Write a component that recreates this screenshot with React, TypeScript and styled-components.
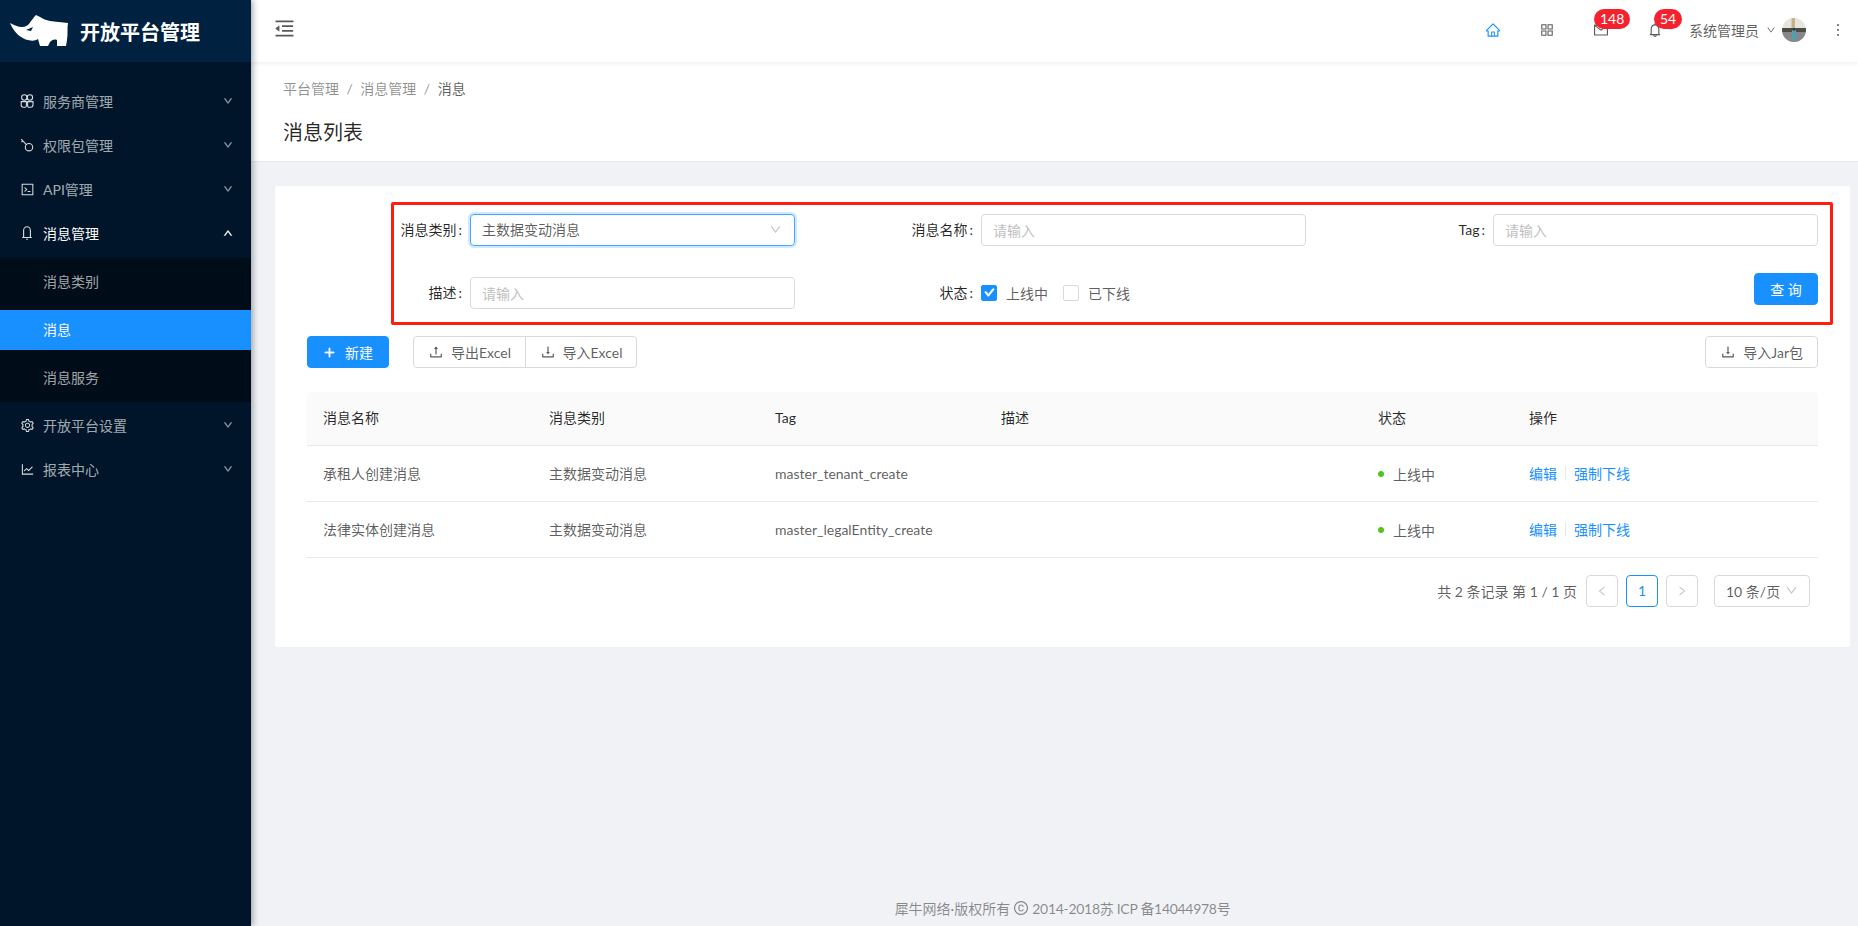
import React from 'react';
import styled, { createGlobalStyle } from 'styled-components';
import {
  AiOutlineBell,
  AiOutlineAppstore,
  AiOutlineCheck,
  AiOutlineCode,
  AiOutlineCopyright,
  AiOutlineDown,
  AiOutlineDownload,
  AiOutlineHome,
  AiOutlineLeft,
  AiOutlineLineChart,
  AiOutlineMail,
  AiOutlineMenuFold,
  AiOutlineMore,
  AiOutlinePlus,
  AiOutlineRight,
  AiOutlineSetting,
  AiOutlineUp,
  AiOutlineUpload,
} from 'react-icons/ai';

const GlobalStyle = createGlobalStyle`
  html, body {
    margin: 0;
    padding: 0;
    background: #f0f2f5;
  }
  * {
    box-sizing: border-box;
  }
  body {
    font-family: Lato, "Noto Sans CJK SC", sans-serif;
    font-size: 14px;
    color: rgba(0, 0, 0, 0.65);
  }
`;

const RhinoLogo = () => (
  <svg width="60" height="34" viewBox="0 0 60 34">
    <path
      fill="#fff"
      d="M0 9C4 11 8 13 12 13C15 13 17 12 19 10C21 7 24 3 26 1L30 3C33 5 36 6 40 7C45 8 52 8 58 9C57 14 58 20 57 26L56 32H47L47 26C44 25 42 26 40 28L38 32H30L28 25C25 27 22 27 18 26C12 25 4 19 0 9Z"
    />
    <path fill="#002140" d="M16 16L23 13L21 17Z" />
  </svg>
);

const CloverIcon = () => (
  <svg width="14" height="14" viewBox="0 0 14 14" fill="none" stroke="currentColor" strokeWidth="1.1">
    <circle cx="4.3" cy="3.5" r="2.7" />
    <circle cx="9.9" cy="3.5" r="2.7" />
    <path d="M1.2 7.6h5.2v4.2a1.4 1.4 0 0 1-1.4 1.4H3.4a2.2 2.2 0 0 1-2.2-2.2z" />
    <path d="M7.6 7.6h5.4v3.2a2.4 2.4 0 0 1-2.4 2.4H9a1.4 1.4 0 0 1-1.4-1.4z" />
  </svg>
);

const RingIcon = () => (
  <svg width="14" height="14" viewBox="0 0 14 14" fill="none" stroke="currentColor" strokeWidth="1.1">
    <circle cx="9" cy="9.2" r="3.7" />
    <path d="M6.4 6.6L1.2 1.2M2.8 2.8L1.4 4.2" />
  </svg>
);

const SideBellIcon = () => (
  <svg width="14" height="14" viewBox="0 0 14 14" fill="none" stroke="currentColor" strokeWidth="1.1">
    <path d="M2.2 11.5h9.6M3.6 11.5V4.6a3.4 3.8 0 0 1 6.8 0v6.9" />
    <circle cx="7" cy="13.2" r="0.8" fill="currentColor" stroke="none" />
  </svg>
);

const AvatarPicture = () => (
  <svg width="24" height="24" viewBox="0 0 24 24">
    <defs>
      <clipPath id="avatar-clip">
        <circle cx="12" cy="12" r="12" />
      </clipPath>
    </defs>
    <g clipPath="url(#avatar-clip)">
      <rect width="24" height="24" fill="#e6e4de" />
      <rect x="9.5" y="0" width="3.5" height="12" fill="#c7b184" />
      <rect y="10" width="24" height="4" fill="#4b4d44" />
      <rect y="14" width="24" height="10" fill="#85878a" />
      <rect x="10" y="12" width="4" height="10" fill="#4f9fae" />
      <circle cx="12" cy="11.5" r="1.2" fill="#3a3430" />
    </g>
  </svg>
);

const Shell = styled.div`
  display: flex;
  min-height: 926px;
`;

const Sidebar = styled.aside`
  position: relative;
  z-index: 2;
  flex: 0 0 251px;
  background: #001529;
  box-shadow: 2px 0 6px rgba(0, 21, 41, 0.35);
`;

const Brand = styled.div`
  display: flex;
  align-items: center;
  gap: 10px;
  height: 62px;
  padding: 0 0 0 10px;
  background: #002140;
`;

const BrandName = styled.span`
  font-size: 20px;
  font-weight: 700;
  color: #fff;
`;

const Menu = styled.nav`
  display: flex;
  flex-direction: column;
  gap: 4px;
  padding-top: 20px;
`;

const MenuItem = styled.div<{ $open?: boolean }>`
  display: flex;
  align-items: center;
  height: 40px;
  padding: 0 18px 2px 20px;
  color: ${(p) => (p.$open ? '#fff' : 'rgba(255, 255, 255, 0.65)')};
`;

const MenuIcon = styled.span`
  display: flex;
  width: 23px;
  font-size: 15px;
  color: rgba(255, 255, 255, 0.85);
`;

const MenuLabel = styled.span`
  flex: 1;
`;

const MenuArrow = styled.span<{ $open?: boolean }>`
  display: flex;
  font-size: 10px;
  opacity: ${(p) => (p.$open ? 1 : 0.75)};
  svg {
    stroke: currentColor;
    stroke-width: 70;
  }
`;

const SubMenu = styled.div`
  display: flex;
  flex-direction: column;
  gap: 8px;
  padding: 4px 0;
  background: #000c17;
`;

const SubItem = styled.div<{ $active?: boolean }>`
  display: flex;
  align-items: center;
  height: 40px;
  padding: 0 0 2px 43px;
  background: ${(p) => (p.$active ? '#1890ff' : 'transparent')};
  color: ${(p) => (p.$active ? '#fff' : 'rgba(255, 255, 255, 0.65)')};
`;

const Main = styled.div`
  flex: 1;
  display: flex;
  flex-direction: column;
  min-width: 0;
`;

const TopBar = styled.header`
  position: relative;
  z-index: 1;
  display: flex;
  align-items: center;
  height: 62px;
  padding: 0 11px 2px 22px;
  background: #fff;
  box-shadow: 0 1px 4px rgba(0, 21, 41, 0.08);
`;

const Collapse = styled.span`
  display: flex;
  font-size: 23px;
  color: rgba(0, 0, 0, 0.65);
  margin: 0 auto 4px 0;
`;

const HeadIcon = styled.span<{ $active?: boolean }>`
  position: relative;
  display: flex;
  justify-content: center;
  width: 54px;
  font-size: 16px;
  color: ${(p) => (p.$active ? '#1890ff' : 'rgba(0, 0, 0, 0.65)')};
`;

const Badge = styled.span<{ $left: number }>`
  position: absolute;
  top: -13px;
  left: ${(p) => p.$left}px;
  height: 20px;
  padding: 0 6px;
  border-radius: 10px;
  background: #f5222d;
  color: #fff;
  font-size: 14px;
  line-height: 20px;
`;

const UserName = styled.span`
  margin-left: 7px;
`;

const UserArrow = styled.span`
  display: flex;
  margin-left: 7px;
  font-size: 10px;
`;

const Avatar = styled.span`
  display: flex;
  margin-left: 6px;
`;

const MoreIcon = styled.span`
  display: flex;
  margin-left: 23px;
  font-size: 18px;
`;

const PageHead = styled.div`
  padding: 16px 24px 15px 32px;
  background: #fff;
  border-bottom: 1px solid #e8e8e8;
`;

const Crumbs = styled.div`
  display: flex;
  line-height: 22px;
  color: rgba(0, 0, 0, 0.45);
`;

const CrumbSep = styled.span`
  margin: 0 7.5px;
`;

const CrumbNow = styled.span`
  color: rgba(0, 0, 0, 0.65);
`;

const PageTitle = styled.h1`
  margin: 18px 0 0;
  font-size: 20px;
  font-weight: 400;
  line-height: 28px;
  color: rgba(0, 0, 0, 0.85);
`;

const Content = styled.main`
  flex: 1;
  padding: 24px 8px 0 24px;
`;

const Card = styled.section`
  padding: 16px 32px 40px;
  background: #fff;
  border-radius: 2px;
`;

const FilterForm = styled.form`
  display: grid;
  grid-template-columns: 401px 511px 512px;
  row-gap: 31px;
  margin: 0 -15px 0 84px;
  padding: 9px 12px 13px 0;
  border: 3px solid #ff1d12;
  border-radius: 2px;
`;

const Field = styled.div`
  display: flex;
  align-items: center;
  justify-content: flex-end;
`;

const FieldLabel = styled.label`
  padding-bottom: 2px;
  color: rgba(0, 0, 0, 0.85);
  white-space: nowrap;
  &::after {
    content: ':';
    margin: 0 8px 0 2px;
  }
`;

const TextInput = styled.input`
  width: 325px;
  height: 32px;
  padding: 0 11px;
  border: 1px solid #d9d9d9;
  border-radius: 4px;
  outline: none;
  font: inherit;
  color: rgba(0, 0, 0, 0.65);
  &::placeholder {
    color: #bfbfbf;
  }
`;

const SelectBox = styled.div<{ $focused?: boolean }>`
  display: flex;
  align-items: center;
  justify-content: space-between;
  width: 325px;
  height: 32px;
  padding: 0 12px 2px 11px;
  border: 1px solid ${(p) => (p.$focused ? '#40a9ff' : '#d9d9d9')};
  border-radius: 4px;
  box-shadow: ${(p) => (p.$focused ? '0 0 0 2px rgba(24, 144, 255, 0.2)' : 'none')};
  svg {
    font-size: 13px;
    color: rgba(0, 0, 0, 0.25);
  }
`;

const CheckGroup = styled.div`
  display: flex;
  align-items: center;
  width: 325px;
  height: 32px;
  padding-bottom: 1px;
`;

const CheckItem = styled.span`
  display: flex;
  align-items: center;
  gap: 9px;
  margin-right: 15px;
`;

const CheckBox = styled.span<{ $checked?: boolean }>`
  display: flex;
  align-items: center;
  justify-content: center;
  width: 16px;
  height: 16px;
  border: 1px solid ${(p) => (p.$checked ? '#1890ff' : '#d9d9d9')};
  border-radius: 2px;
  background: ${(p) => (p.$checked ? '#1890ff' : '#fff')};
  color: #fff;
  font-size: 11px;
  svg {
    stroke: currentColor;
    stroke-width: 110;
  }
`;

const Button = styled.button<{ $primary?: boolean }>`
  display: inline-flex;
  align-items: center;
  justify-content: center;
  gap: 7px;
  height: 32px;
  padding: 0 14px;
  border: 1px solid ${(p) => (p.$primary ? '#1890ff' : '#d9d9d9')};
  border-radius: 4px;
  background: ${(p) => (p.$primary ? '#1890ff' : '#fff')};
  color: ${(p) => (p.$primary ? '#fff' : 'rgba(0, 0, 0, 0.65)')};
  font: inherit;
  white-space: nowrap;
  svg {
    font-size: 16px;
  }
`;

const QueryButton = styled(Button)`
  justify-self: end;
  width: 64px;
  margin-top: -4px;
`;

const NewButton = styled(Button)`
  width: 82px;
  gap: 9px;
  padding: 0;
  svg {
    font-size: 13px;
    stroke: currentColor;
    stroke-width: 70;
  }
`;

const Toolbar = styled.div`
  display: flex;
  align-items: center;
  margin-top: 11px;
`;

const ButtonGroup = styled.div`
  display: flex;
  margin: 0 auto 0 24px;
  ${Button}:first-child {
    width: 113px;
    padding: 0;
    border-radius: 4px 0 0 4px;
  }
  ${Button}:last-child {
    width: 112px;
    padding: 0;
    margin-left: -1px;
    border-radius: 0 4px 4px 0;
  }
`;

const Table = styled.table`
  width: 1511px;
  margin-top: 24px;
  border-collapse: collapse;
  table-layout: fixed;
  th {
    height: 53px;
    padding: 0 16px 2px;
    background: #fafafa;
    border-bottom: 1px solid #e8e8e8;
    font-weight: 400;
    text-align: left;
    color: rgba(0, 0, 0, 0.85);
  }
  th:first-child {
    border-radius: 4px 0 0 0;
  }
  th:last-child {
    border-radius: 0 4px 0 0;
  }
  td {
    height: 56px;
    padding: 0 16px;
    border-bottom: 1px solid #e8e8e8;
  }
`;

const Status = styled.span`
  display: flex;
  align-items: center;
  gap: 9px;
  padding-top: 2px;
`;

const StatusDot = styled.span`
  width: 6px;
  height: 6px;
  border-radius: 50%;
  background: #52c41a;
`;

const Actions = styled.span`
  display: flex;
  align-items: center;
  color: #1890ff;
`;

const ActionSep = styled.span`
  width: 1px;
  height: 14px;
  margin: 0 8px;
  background: #e8e8e8;
`;

const Pager = styled.div`
  display: flex;
  align-items: center;
  justify-content: flex-end;
  margin-top: 17px;
  padding-right: 8px;
`;

const PagerInfo = styled.span`
  margin-right: 9px;
`;

const PageButton = styled.span<{ $current?: boolean; $gap?: number }>`
  display: flex;
  align-items: center;
  justify-content: center;
  width: 32px;
  height: 32px;
  margin-right: ${(p) => p.$gap ?? 8}px;
  border: 1px solid ${(p) => (p.$current ? '#1890ff' : '#d9d9d9')};
  border-radius: 4px;
  color: ${(p) => (p.$current ? '#1890ff' : 'rgba(0, 0, 0, 0.25)')};
  font-size: ${(p) => (p.$current ? 14 : 12)}px;
`;

const SizeSelect = styled.span`
  display: flex;
  align-items: center;
  justify-content: space-between;
  width: 96px;
  height: 32px;
  padding: 0 11px 0 11px;
  border: 1px solid #d9d9d9;
  border-radius: 4px;
  white-space: nowrap;
  svg {
    font-size: 13px;
    color: rgba(0, 0, 0, 0.25);
  }
`;

const Footer = styled.footer`
  display: flex;
  align-items: center;
  justify-content: center;
  gap: 3px;
  height: 36px;
  padding-left: 16px;
  color: rgba(0, 0, 0, 0.45);
  svg {
    font-size: 16px;
  }
`;

const FooterCode = styled.span`
  letter-spacing: -0.3px;
`;

const menuTop = [
  { label: '服务商管理', icon: <CloverIcon /> },
  { label: '权限包管理', icon: <RingIcon /> },
  { label: 'API管理', icon: <AiOutlineCode /> },
];

const menuBottom = [
  { label: '开放平台设置', icon: <AiOutlineSetting /> },
  { label: '报表中心', icon: <AiOutlineLineChart /> },
];

const rows = [
  { name: '承租人创建消息', tag: 'master_tenant_create' },
  { name: '法律实体创建消息', tag: 'master_legalEntity_create' },
];

const App: React.FC = () => {
  return (
    <Shell>
      <GlobalStyle />
      <Sidebar>
        <Brand>
          <RhinoLogo />
          <BrandName>开放平台管理</BrandName>
        </Brand>
        <Menu>
          {menuTop.map((item) => (
            <MenuItem key={item.label}>
              <MenuIcon>{item.icon}</MenuIcon>
              <MenuLabel>{item.label}</MenuLabel>
              <MenuArrow>
                <AiOutlineDown />
              </MenuArrow>
            </MenuItem>
          ))}
          <MenuItem $open>
            <MenuIcon>
              <SideBellIcon />
            </MenuIcon>
            <MenuLabel>消息管理</MenuLabel>
            <MenuArrow $open>
              <AiOutlineUp />
            </MenuArrow>
          </MenuItem>
          <SubMenu>
            <SubItem>消息类别</SubItem>
            <SubItem $active>消息</SubItem>
            <SubItem>消息服务</SubItem>
          </SubMenu>
          {menuBottom.map((item) => (
            <MenuItem key={item.label}>
              <MenuIcon>{item.icon}</MenuIcon>
              <MenuLabel>{item.label}</MenuLabel>
              <MenuArrow>
                <AiOutlineDown />
              </MenuArrow>
            </MenuItem>
          ))}
        </Menu>
      </Sidebar>
      <Main>
        <TopBar>
          <Collapse>
            <AiOutlineMenuFold />
          </Collapse>
          <HeadIcon $active>
            <AiOutlineHome />
          </HeadIcon>
          <HeadIcon>
            <AiOutlineAppstore />
          </HeadIcon>
          <HeadIcon>
            <AiOutlineMail />
            <Badge $left={20}>148</Badge>
          </HeadIcon>
          <HeadIcon>
            <AiOutlineBell />
            <Badge $left={26}>54</Badge>
          </HeadIcon>
          <UserName>系统管理员</UserName>
          <UserArrow>
            <AiOutlineDown />
          </UserArrow>
          <Avatar>
            <AvatarPicture />
          </Avatar>
          <MoreIcon>
            <AiOutlineMore />
          </MoreIcon>
        </TopBar>
        <PageHead>
          <Crumbs>
            <span>平台管理</span>
            <CrumbSep>/</CrumbSep>
            <span>消息管理</span>
            <CrumbSep>/</CrumbSep>
            <CrumbNow>消息</CrumbNow>
          </Crumbs>
          <PageTitle>消息列表</PageTitle>
        </PageHead>
        <Content>
          <Card>
            <FilterForm>
              <Field>
                <FieldLabel>消息类别</FieldLabel>
                <SelectBox $focused>
                  <span>主数据变动消息</span>
                  <AiOutlineDown />
                </SelectBox>
              </Field>
              <Field>
                <FieldLabel>消息名称</FieldLabel>
                <TextInput placeholder="请输入" />
              </Field>
              <Field>
                <FieldLabel>Tag</FieldLabel>
                <TextInput placeholder="请输入" />
              </Field>
              <Field>
                <FieldLabel>描述</FieldLabel>
                <TextInput placeholder="请输入" />
              </Field>
              <Field>
                <FieldLabel>状态</FieldLabel>
                <CheckGroup>
                  <CheckItem>
                    <CheckBox $checked>
                      <AiOutlineCheck />
                    </CheckBox>
                    上线中
                  </CheckItem>
                  <CheckItem>
                    <CheckBox />
                    已下线
                  </CheckItem>
                </CheckGroup>
              </Field>
              <QueryButton $primary type="button">
                查 询
              </QueryButton>
            </FilterForm>
            <Toolbar>
              <NewButton $primary type="button">
                <AiOutlinePlus />
                新建
              </NewButton>
              <ButtonGroup>
                <Button type="button">
                  <AiOutlineUpload />
                  导出Excel
                </Button>
                <Button type="button">
                  <AiOutlineDownload />
                  导入Excel
                </Button>
              </ButtonGroup>
              <Button type="button">
                <AiOutlineDownload />
                导入Jar包
              </Button>
            </Toolbar>
            <Table>
              <colgroup>
                <col width="226" />
                <col width="226" />
                <col width="226" />
                <col width="377" />
                <col width="151" />
                <col width="305" />
              </colgroup>
              <thead>
                <tr>
                  <th>消息名称</th>
                  <th>消息类别</th>
                  <th>Tag</th>
                  <th>描述</th>
                  <th>状态</th>
                  <th>操作</th>
                </tr>
              </thead>
              <tbody>
                {rows.map((row) => (
                  <tr key={row.tag}>
                    <td>{row.name}</td>
                    <td>主数据变动消息</td>
                    <td>{row.tag}</td>
                    <td></td>
                    <td>
                      <Status>
                        <StatusDot />
                        上线中
                      </Status>
                    </td>
                    <td>
                      <Actions>
                        编辑
                        <ActionSep />
                        强制下线
                      </Actions>
                    </td>
                  </tr>
                ))}
              </tbody>
            </Table>
            <Pager>
              <PagerInfo>共 2 条记录 第 1 / 1 页</PagerInfo>
              <PageButton>
                <AiOutlineLeft />
              </PageButton>
              <PageButton $current>1</PageButton>
              <PageButton $gap={16}>
                <AiOutlineRight />
              </PageButton>
              <SizeSelect>
                10 条/页
                <AiOutlineDown />
              </SizeSelect>
            </Pager>
          </Card>
        </Content>
        <Footer>
          犀牛网络·版权所有
          <AiOutlineCopyright />
          <FooterCode>2014-2018苏 ICP 备14044978号</FooterCode>
        </Footer>
      </Main>
    </Shell>
  );
};

export default App;
